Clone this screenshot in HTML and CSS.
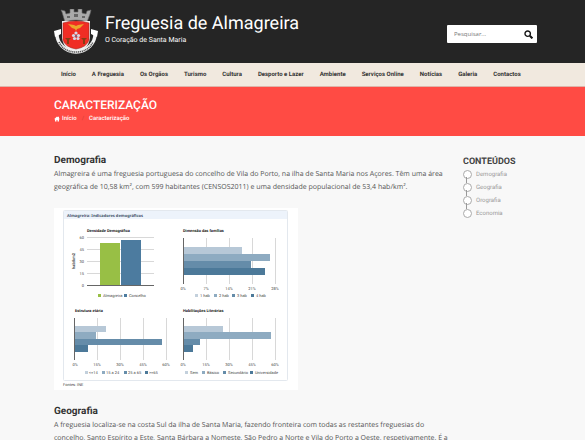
FILE: index.html
```html
<!DOCTYPE html>
<html lang="pt">
<head>
<meta charset="utf-8">
<meta name="viewport" content="width=device-width, initial-scale=1">
<title>Freguesia de Almagreira</title>
<link rel="stylesheet" href="styles.css">
</head>
<body>
<header class="site-header">
  <div class="container header-row">
    <a class="brand" href="#">
      <svg class="crest" viewBox="0 0 44 46" aria-hidden="true">
        <path fill="#aaa" stroke="#666" stroke-width=".6" d="M8 3 7 1l4 1 1 3 4-1V0h4v3h4V0h4v4l4 1 1-3 4-1-1 4-3 8q-11-4-22 0z"/>
        <path fill="#666" d="M13 7h3v2h-3zM20 5h4v3h-4zM28 7h3v2h-3z"/>
        <path fill="#eee" d="M8 12h28v17q-2 13-14 14Q10 42 8 29z"/>
        <path fill="#f02d24" stroke="#a42922" stroke-width=".6" d="M9 14q13-4 26 0v17q-2 7-13 9-11-2-13-9z"/>
        <path fill="#eca52b" d="m14 15 6 1 2 1 2-1 6-1-4 4-3 1-1 2-1-2-3-1z"/>
        <g fill="#d8d8e6"><circle cx="22" cy="24" r="1.600"/><circle cx="19.500" cy="26.500" r="1.600"/><circle cx="24.500" cy="26.500" r="1.600"/><circle cx="20.500" cy="29.500" r="1.600"/><circle cx="24" cy="29.500" r="1.600"/></g>
        <circle cx="22" cy="27" r="1" fill="#597596"/>
        <path fill="#863d15" d="M11 29h6l-2 2v4h-2v-4zM27 29h6l-2 2v4h-2v-4z"/>
        <path fill="none" stroke="#f2f2f2" stroke-width="3.400" d="M3 25q0 7 5 12 6 6 14 6t14-6q5-5 5-12"/>
        <path fill="none" stroke="#555" stroke-width="1.600" stroke-dasharray="1.2 .7" d="M5 33q5 10 17 10t17-10"/>
        <path fill="#fff" d="m0 22 7-2v5l-6 3zM44 22l-7-2v5l6 3z"/>
      </svg>
      <span class="brand-text">
        <span class="brand-name">Freguesia de Almagreira</span>
        <span class="brand-tag">O Coração de Santa Maria</span>
      </span>
    </a>
    <form class="search" role="search">
      <input class="search-input" type="search" aria-label="Pesquisar" placeholder="Pesquisar...">
      <button class="search-button" type="button" aria-label="Pesquisar">
        <svg class="search-icon" viewBox="0 0 9 9" aria-hidden="true"><circle cx="3.7" cy="3.7" r="2.7" fill="none" stroke="#151515" stroke-width="1.4"/><path stroke="#151515" stroke-width="2" d="m5.8 5.8 2.6 2.6"/></svg>
      </button>
    </form>
  </div>
</header>
<nav class="site-nav" aria-label="Principal">
  <ul class="container nav-list">
    <li><a href="#">Início</a></li>
    <li><a href="#">A Freguesia</a></li>
    <li><a href="#">Os Orgãos</a></li>
    <li><a href="#">Turismo</a></li>
    <li><a href="#">Cultura</a></li>
    <li><a href="#">Desporto e Lazer</a></li>
    <li><a href="#">Ambiente</a></li>
    <li><a href="#">Serviços Online</a></li>
    <li><a href="#">Notícias</a></li>
    <li><a href="#">Galeria</a></li>
    <li><a href="#">Contactos</a></li>
  </ul>
</nav>
<section class="banner">
  <div class="container">
    <h1 class="banner-title">CARACTERIZAÇÃO</h1>
    <div class="crumbs">
      <a class="crumb" href="#"><svg class="home-icon" viewBox="0 0 6 6" aria-hidden="true"><path fill="#fff" d="M3 .4 0 3.2h1v2.4h1.5V4h1v1.6H5V3.2h1L5 2.2V.7H4v.6z"/></svg>Início</a>
      <span class="crumb-mark" aria-hidden="true">/</span>
      <span>Caracterização</span>
    </div>
  </div>
</section>
<div class="container columns">
  <main>
    <section class="article">
      <h2 class="heading" id="demografia">Demografia</h2>
      <p class="copy">Almagreira é uma freguesia portuguesa do concelho de Vila do Porto, na ilha de Santa Maria nos Açores. Têm uma área geográfica de 10,58 km², com 599 habitantes (CENSOS2011) e uma densidade populacional de 53,4 hab/km².</p>
    </section>
    <figure class="figure">
      <svg class="charts" viewBox="0 0 244 182" role="img" aria-label="Almagreira: Indicadores demográficos">
        <rect x="9.5" y="2.5" width="224" height="170" rx="1" fill="#fff" stroke="#e3e8ee"/>
        <path fill="#edf3fb" d="M10 3h223v8H10z"/>
        <text class="chart-head" x="13" y="9">Almagreira: Indicadores demográficos</text>

        <text class="chart-title" x="33" y="24">Densidade Demográfica</text>
        <path class="grid-line" d="M33 29.5h67M33 41.5h67M33 53.5h67M33 65.5h67"/>
        <path class="axis" d="M33 77.5h67"/>
        <path fill="#98bf45" d="M46 35h20v42H46z"/>
        <path fill="#4c7b9f" d="M67 32h20v45H67z"/>
        <g class="label end"><text x="30" y="31">60</text><text x="30" y="43">45</text><text x="30" y="55">30</text><text x="30" y="67">15</text><text x="30" y="79">0</text></g>
        <text class="chart-axis-title" transform="translate(21 53) rotate(-90)">hab/km2</text>
        <path fill="#98bf45" d="M44 86h3v3h-3z"/><path fill="#4c7b9f" d="M70 86h3v3h-3z"/>
        <g class="label"><text x="49" y="89">Almagreira</text><text x="75" y="89">Concelho</text></g>

        <text class="chart-title" x="129" y="24">Dimensão das famílias</text>
        <path class="grid-line" d="M152.500 30v46M175.500 30v46M198.500 30v46M221.500 30v46"/>
        <path fill="#b7c8d7" d="M130 39h58v7h-58z"/><path fill="#8eabc1" d="M130 46h86v7h-86z"/><path fill="#658ca9" d="M130 53h67v7h-67z"/><path fill="#4c7999" d="M130 60h81v7h-81z"/>
        <path class="axis" d="M129.500 30v46"/>
        <g class="label mid"><text x="129" y="82">0%</text><text x="152" y="82">7%</text><text x="175" y="82">14%</text><text x="198" y="82">21%</text><text x="221" y="82">28%</text></g>
        <path fill="#c3d0dc" d="M141 86h3v3h-3z"/><path fill="#8eabc1" d="M160 86h3v3h-3z"/><path fill="#658ca9" d="M178 86h3v3h-3z"/><path fill="#4c7999" d="M197 86h3v3h-3z"/>
        <g class="label"><text x="146" y="89">1 hab</text><text x="165" y="89">2 hab</text><text x="183" y="89">3 hab</text><text x="202" y="89">4 hab</text></g>

        <text class="chart-title" x="21" y="104">Estrutura etária</text>
        <path class="grid-line" d="M43.500 110v42M66.500 110v42M89.500 110v42M112.500 110v42"/>
        <path fill="#b7c8d7" d="M21 118h31v6H21z"/><path fill="#8eabc1" d="M21 124h21v7H21z"/><path fill="#658ca9" d="M21 131h87v6H21z"/><path fill="#4c7999" d="M21 137h13v7H21z"/>
        <path class="axis" d="M20.500 110v42"/>
        <g class="label mid"><text x="21" y="158">0%</text><text x="43" y="158">15%</text><text x="66" y="158">30%</text><text x="89" y="158">45%</text><text x="112" y="158">60%</text></g>
        <path fill="#c3d0dc" d="M31 163h3v3h-3z"/><path fill="#8eabc1" d="M48 163h3v3h-3z"/><path fill="#658ca9" d="M70 163h3v3h-3z"/><path fill="#4c7999" d="M91 163h3v3h-3z"/>
        <g class="label"><text x="35" y="166">&lt;=14</text><text x="52" y="166">15 a 24</text><text x="74" y="166">25 a 65</text><text x="95" y="166">&gt;=65</text></g>

        <text class="chart-title" x="129" y="104">Habilitações Literárias</text>
        <path class="grid-line" d="M152.500 110v42M175.500 110v42M198.500 110v42M221.500 110v42"/>
        <path fill="#b7c8d7" d="M130 118h39v6h-39z"/><path fill="#8eabc1" d="M130 124h87v7h-87z"/><path fill="#658ca9" d="M130 131h16v6h-16z"/><path fill="#4c7999" d="M130 137h9v7h-9z"/>
        <path class="axis" d="M129.500 110v42"/>
        <g class="label mid"><text x="129" y="158">0%</text><text x="152" y="158">15%</text><text x="175" y="158">30%</text><text x="198" y="158">45%</text><text x="221" y="158">60%</text></g>
        <path fill="#c3d0dc" d="M131 163h3v3h-3z"/><path fill="#8eabc1" d="M148 163h3v3h-3z"/><path fill="#658ca9" d="M169 163h3v3h-3z"/><path fill="#4c7999" d="M196 163h3v3h-3z"/>
        <g class="label"><text x="136" y="166">Sem</text><text x="153" y="166">Básico</text><text x="174" y="166">Secundário</text><text x="201" y="166">Universidade</text></g>
        <text class="source" x="9" y="178">Fontes: INE</text>
      </svg>
    </figure>
    <section class="article">
      <h2 class="heading" id="geografia">Geografia</h2>
      <p class="copy">A freguesia localiza-se na costa Sul da ilha de Santa Maria, fazendo fronteira com todas as restantes freguesias do concelho, Santo Espírito a Este, Santa Bárbara a Nomeste, São Pedro a Norte e Vila do Porto a Oeste, respetivamente. É a</p>
    </section>
  </main>
  <aside class="contents">
    <h2 class="contents-title">CONTEÚDOS</h2>
    <ul class="contents-list">
      <li class="contents-item"><a href="#demografia">Demografia</a></li>
      <li class="contents-item"><a href="#geografia">Geografia</a></li>
      <li class="contents-item"><a href="#">Orografia</a></li>
      <li class="contents-item"><a href="#">Economia</a></li>
    </ul>
  </aside>
</div>
</body>
</html>
```
FILE: styles.css
```css
* { box-sizing: border-box; }
body {
  margin: 0;
  height: 100vh;
  overflow: hidden;
  background: #f8f8f8;
  color: #555;
  font-family: Roboto, "Liberation Sans", sans-serif;
  text-rendering: geometricPrecision;
}
h1, h2, p, ul, figure { margin: 0; padding: 0; }
ul { list-style: none; }
a { color: inherit; text-decoration: none; }
.container { padding-left: 54px; padding-right: 48px; }

.site-header { background: #252525; color: #fff; }
.header-row { display: flex; align-items: center; justify-content: space-between; min-height: 63px; }
.brand { display: flex; align-items: center; gap: 7px; }
.crest { width: 44px; height: 46px; }
.brand-text { display: flex; flex-direction: column; padding-bottom: 4px; }
.brand-name { font-size: 18px; line-height: 20px; }
.brand-tag { font-size: 7px; line-height: 12px; }
.search { display: flex; align-items: center; width: 90px; height: 18px; margin-top: 5px; background: #fff; border-radius: 1px; }
.search-input { flex: 1; min-width: 0; padding: 0 0 0 7px; border: 0; outline: 0; background: none; font: 6px/18px "Open Sans", sans-serif; color: #777; }
.search-input::placeholder { color: #777; }
.search-button { display: flex; padding: 0 4px; border: 0; background: none; }
.search-icon { width: 9px; height: 9px; }

.site-nav { padding-top: 1px; background: #f1e9df; border-bottom: 1px solid #dfb4a9; }
.nav-list { display: flex; gap: 16px; padding-left: 61px; white-space: nowrap; font-size: 6px; font-weight: 700; line-height: 22px; color: #333; }

.banner { min-height: 49px; padding-top: 11px; background: #ff4b44; color: #fff; }
.banner-title { font-size: 12px; font-weight: 500; line-height: 14px; }
.crumbs { display: flex; align-items: center; gap: 5px; padding-top: 1px; font-size: 6px; font-weight: 500; line-height: 12px; }
.crumb { display: flex; align-items: center; gap: 2px; }
.home-icon { width: 6px; height: 6px; }
.crumb-mark { color: #d8423d; }

.columns { display: grid; grid-template-columns: minmax(0, 1fr) 74px; gap: 12px; padding-top: 17px; }
.heading { font-size: 10px; font-weight: 700; line-height: 15px; color: #333; }
.copy { font-family: "Open Sans", Roboto, sans-serif; font-size: 7px; line-height: 13px; }
.figure { width: 244px; margin: 14px 0; background: #fff; }
.charts { display: block; width: 100%; }
.chart-head, .chart-title, .chart-axis-title, .label, .source { font-size: 4px; fill: #444; }
.chart-head { font-family: "Noto Sans", sans-serif; font-weight: 700; fill: #47566b; }
.chart-title { font-weight: 700; fill: #222; }
.chart-axis-title { text-anchor: middle; font-weight: 700; }
.end { text-anchor: end; }
.mid { text-anchor: middle; }
.grid-line { stroke: #d8d8d8; stroke-width: 1; }
.axis { stroke: #666; stroke-width: 1; }

.contents { padding-top: 3px; }
.contents-title { font-size: 9px; font-weight: 700; line-height: 12px; color: #444; }
.contents-item { position: relative; padding-left: 13px; font-size: 6px; line-height: 13px; color: #999; }
.contents-item::before { content: ""; position: absolute; left: 0; top: 2px; width: 7px; height: 7px; border: 1px solid #aaa; border-radius: 50%; background: #fff; }
.contents-item + .contents-item::after { content: ""; position: absolute; left: 3px; top: -4px; width: 1px; height: 6px; background: #999; }
```
